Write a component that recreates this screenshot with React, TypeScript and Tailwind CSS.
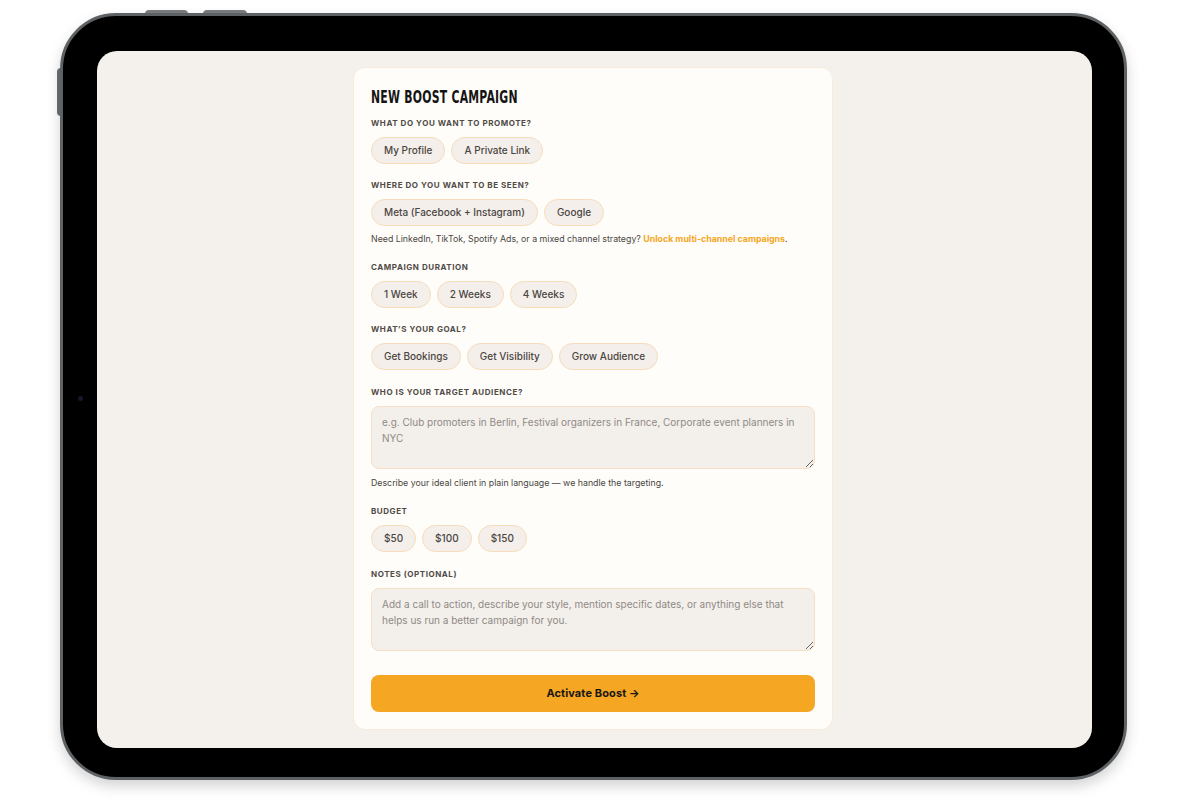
import React, { useState } from 'react';

const body = { fontFamily: 'Inter, "Noto Sans", sans-serif' };

const Label: React.FC<{ children: React.ReactNode }> = ({ children }) => (
  <p className="text-[8px] leading-[12px] font-bold uppercase tracking-[0.07em] text-[#4f4b47] mb-2">{children}</p>
);

const Chip: React.FC<{ label: string; active?: boolean; onClick?: () => void }> = ({ label, active, onClick }) => (
  <button
    onClick={onClick}
    className={`h-[27px] px-[12px] rounded-full border text-[10px] font-medium text-[#4a4643] ${
      active ? 'bg-[#fde9c8] border-[#f5a623]' : 'bg-[#f4efea] border-[#f6dcb8]'
    }`}
  >
    {label}
  </button>
);

const ChipGroup: React.FC<{ options: string[] }> = ({ options }) => {
  const [sel, setSel] = useState<string | null>(null);
  return (
    <div className="flex gap-[6px]">
      {options.map((o) => (
        <Chip key={o} label={o} active={sel === o} onClick={() => setSel(o)} />
      ))}
    </div>
  );
};

const area =
  'block w-full h-[63px] rounded-[8px] bg-[#f3efeb] border border-[#f6dfc4] px-[10px] py-[7px] text-[10px] leading-[16px] text-[#4a4643] placeholder:text-[#8f8a85] outline-none';

export default function App() {
  return (
    <div className="w-[1200px] h-[800px] bg-white overflow-hidden" style={body}>
      <div className="relative ml-[60px] mt-[13px] w-[1067px] h-[767px]">
        {/* hardware buttons */}
        <div className="absolute left-[85px] -top-[3px] w-[43px] h-[4px] rounded-t-sm bg-[#7a7e81]" />
        <div className="absolute left-[143px] -top-[3px] w-[44px] h-[4px] rounded-t-sm bg-[#7a7e81]" />
        <div className="absolute -left-[3px] top-[55px] w-[4px] h-[48px] rounded-l-sm bg-[#6b6f72]" />

        <div className="w-full h-full rounded-[56px] bg-black border-[3px] border-[#5d6164] shadow-[0_6px_14px_rgba(0,0,0,0.18)] pl-[34px] pt-[35px] pr-[32px] pb-[29px] relative">
          {/* camera */}
          <div className="absolute left-[15px] top-[380px] w-[5px] h-[5px] rounded-full bg-[#151a2a]" />

          <div className="w-full h-full rounded-[20px] bg-[#f4f0eb] overflow-hidden flex justify-center pt-4">
            <div className="w-[480px] mr-[3px] self-start rounded-[12px] bg-[#fffdf9] border border-[#f8ebdc] px-[17px] pt-[19px] pb-[17px]">
              <h1
                className="block origin-left scale-x-[0.71] whitespace-nowrap text-[17px] leading-[20px] font-bold uppercase tracking-[0.02em] text-[#141414] mb-[10px]"
                style={{ fontFamily: '"DejaVu Sans Condensed", "DejaVu Sans", sans-serif' }}
              >
                New Boost Campaign
              </h1>

              <div className="mb-[15px]">
                <Label>What do you want to promote?</Label>
                <ChipGroup options={['My Profile', 'A Private Link']} />
              </div>

              <div className="mb-[16px]">
                <Label>Where do you want to be seen?</Label>
                <ChipGroup options={['Meta (Facebook + Instagram)', 'Google']} />
                <p className="mt-[7px] text-[8.8px] leading-[12px] text-[#4a4643]">
                  Need LinkedIn, TikTok, Spotify Ads, or a mixed channel strategy?{' '}
                  <a className="font-bold text-[#f5a623]">Unlock multi-channel campaigns</a>.
                </p>
              </div>

              <div className="mb-[15px]">
                <Label>Campaign duration</Label>
                <ChipGroup options={['1 Week', '2 Weeks', '4 Weeks']} />
              </div>

              <div className="mb-[16px]">
                <Label>What’s your goal?</Label>
                <ChipGroup options={['Get Bookings', 'Get Visibility', 'Grow Audience']} />
              </div>

              <div className="mb-[16px]">
                <Label>Who is your target audience?</Label>
                <textarea
                  className={area}
                  placeholder="e.g. Club promoters in Berlin, Festival organizers in France, Corporate event planners in NYC"
                />
                <p className="mt-[8px] text-[8.8px] leading-[12px] text-[#4a4643]">
                  Describe your ideal client in plain language — we handle the targeting.
                </p>
              </div>

              <div className="mb-[16px]">
                <Label>Budget</Label>
                <ChipGroup options={['$50', '$100', '$150']} />
              </div>

              <div className="mb-[24px]">
                <Label>Notes (optional)</Label>
                <textarea
                  className={area}
                  placeholder="Add a call to action, describe your style, mention specific dates, or anything else that helps us run a better campaign for you."
                />
              </div>

              <button className="w-full h-[37px] rounded-[8px] bg-[#f5a623] text-[11px] font-bold text-[#1a1712] tracking-[0.01em]">
                Activate Boost →
              </button>
            </div>
          </div>
        </div>
      </div>
    </div>
  );
}
